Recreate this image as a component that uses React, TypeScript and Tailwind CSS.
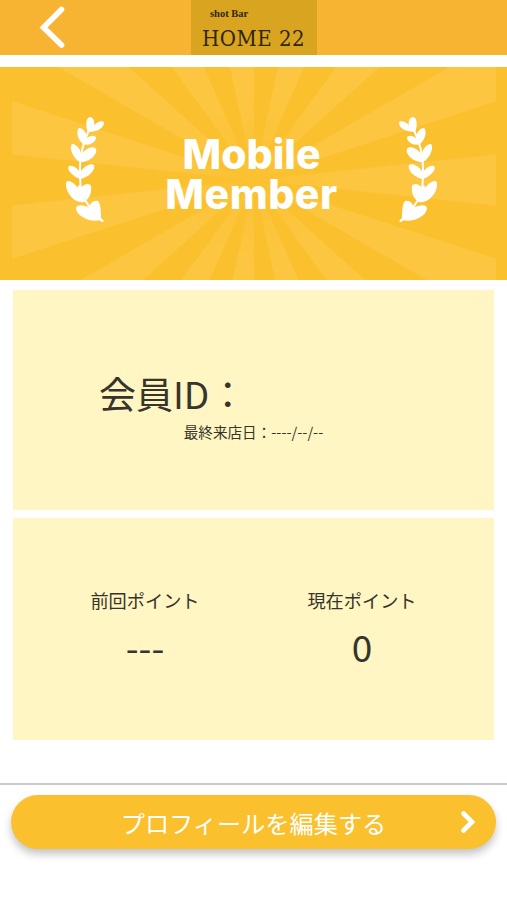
import React from 'react';
import clsx from 'clsx';

// Centre of the sunburst inside the 507x213 banner
const CENTER_X = 254;
const CENTER_Y = 113;
const RAYS = Array.from({ length: 15 }, (_, i) => i * 24);

function rayPoints(angle: number) {
  const edge = (deg: number) => {
    const rad = (deg * Math.PI) / 180;
    return `${CENTER_X + Math.cos(rad) * 400},${CENTER_Y - Math.sin(rad) * 400}`;
  };
  return `${CENTER_X},${CENTER_Y} ${edge(angle - 6)} ${edge(angle + 6)}`;
}

function Sunburst() {
  return (
    <svg className="absolute inset-0" width="507" height="213" viewBox="0 0 507 213">
      <defs>
        <clipPath id="burst">
          <rect x="12" y="0" width="484" height="213" />
        </clipPath>
        <radialGradient id="fade" gradientUnits="userSpaceOnUse" cx={CENTER_X} cy={CENTER_Y} r="100">
          <stop offset="0" stopColor="#fdc640" stopOpacity="0.2" />
          <stop offset="0.8" stopColor="#fdc640" />
        </radialGradient>
      </defs>
      <g clipPath="url(#burst)" fill="url(#fade)">
        {RAYS.map((angle) => (
          <polygon key={angle} points={rayPoints(angle)} />
        ))}
      </g>
    </svg>
  );
}

function Laurel({ flip = false }: { flip?: boolean }) {
  return (
    <svg
      className={clsx('relative mb-2 shrink-0', flip && '-scale-x-100')}
      width="38"
      height="106"
      viewBox="0 0 38 106"
      fill="#fff"
    >
      {/* Stem */}
      <path
        d="M23 13C18 24 14 36 14 50C14 66 14 74 19 83C24 91 30 99 36 104"
        fill="none"
        stroke="#fff"
        strokeWidth="2"
        strokeLinecap="round"
      />
      {/* Leaf pairs, tip to base */}
      <path d="M22 15C19 9 20 0 24 0C27 0 29 4 28 8C32 4 38 3 38 6C38 11 31 15 22 15Z" />
      <path d="M17 27C11 22 10 13 13 11C17 11 21 16 21 21C25 18 30 18 30 21C29 26 23 29 17 27Z" />
      <path d="M14 45C6 41 3 29 6 27C11 27 15 33 15 38C19 31 28 28 30 32C32 38 22 46 14 45Z" />
      <path d="M14 62C6 59 0 52 3 49C8 48 13 53 14 56C18 48 26 46 28 48C30 53 22 61 14 62Z" />
      <path d="M18 85C9 87 -1 76 0 66C2 61 9 67 12 71C12 67 14 68 15 71C18 66 24 66 25 69C26 76 23 82 18 85Z" />
      <path d="M35 103C24 106 10 99 10 91C11 87 18 88 24 91C23 86 28 83 32 84C35 87 35 97 35 101L38 104L36 105Z" />
    </svg>
  );
}

function Point({ label, value }: { label: string; value: string }) {
  return (
    <div className="flex w-[217px] flex-col items-center">
      <span className="text-[18.2px] leading-7">{label}</span>
      <span className="mt-[12px] text-[37px] leading-[40px]">{value}</span>
    </div>
  );
}

export default function App() {
  return (
    <div className="flex h-[900px] w-[507px] flex-col overflow-hidden bg-white font-['Noto_Sans_CJK_JP',sans-serif] text-[#37342b]">
      <header className="grid h-[55px] shrink-0 grid-cols-[191px_126px_1fr] bg-[#f6b432]">
        <button className="flex items-center pl-[39px]" aria-label="戻る">
          <svg width="28" height="44" viewBox="0 0 28 44" fill="none" stroke="#fff" strokeWidth="5.6" strokeLinecap="round">
            <path d="M22.5 3.5L4.5 21.5L22.5 39" />
          </svg>
        </button>
        <div className="flex flex-col bg-[#d9a521] pl-[11px] text-[#30260b]">
          <span className="mt-[8px] pl-2 font-['Liberation_Serif',serif] text-[10.5px] leading-3 font-bold">shot Bar</span>
          <span className="mt-[5px] font-['DejaVu_Serif_Condensed','DejaVu_Serif',serif] text-[22px] leading-7 tracking-[0.5px] whitespace-nowrap">
            HOME 22
          </span>
        </div>
      </header>

      <section className="relative mt-3 flex h-[213px] shrink-0 items-center justify-between bg-[#fac02e] pr-[70px] pl-[66px]">
        <Sunburst />
        <Laurel />
        <h1 className="relative flex flex-col items-center font-['Inter',sans-serif] text-[41px] leading-[40px] font-extrabold text-white">
          <span>Mobile</span>
          <span className="tracking-[0.5px]">Member</span>
        </h1>
        <Laurel flip />
      </section>

      <section className="mx-[13px] mt-[10px] flex h-[220px] shrink-0 flex-col bg-[#fff6c3] pt-[78px]">
        <p className="pl-[86px] text-[37px] leading-[50px]">会員ID：</p>
        <p className="mt-[4px] text-center text-[14.6px] leading-5">最終来店日：----/--/--</p>
      </section>

      <section className="mx-[13px] mt-2 flex h-[222px] shrink-0 justify-center bg-[#fff6c3] pt-[68px]">
        <Point label="前回ポイント" value="---" />
        <Point label="現在ポイント" value="0" />
      </section>

      <footer className="mt-[43px] flex-1 border-t-2 border-[#cbcbcb] px-[11px] pt-[10px]">
        <button className="relative flex h-[54px] w-full items-center justify-center rounded-full bg-[#fac02e] pt-0.5 text-[24.2px] text-white shadow-[0_5px_8px_rgba(0,0,0,0.24)]">
          プロフィールを編集する
          <svg
            className="absolute top-4 right-5"
            width="16"
            height="22"
            viewBox="0 0 16 22"
            fill="none"
            stroke="#fff"
            strokeWidth="4.6"
            strokeLinecap="round"
          >
            <path d="M3.5 2.5L12 11L3.5 19.5" />
          </svg>
        </button>
      </footer>
    </div>
  );
}
